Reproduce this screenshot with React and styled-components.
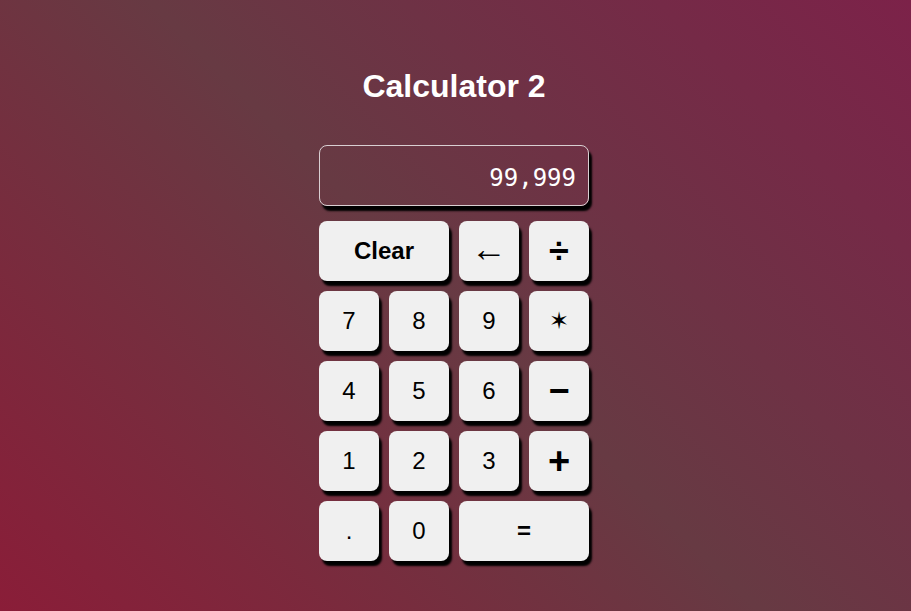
import React from 'react'
import styled, { createGlobalStyle } from 'styled-components'

const GlobalStyle = createGlobalStyle`
    html, body {
        margin: 0;
        padding: 0;
    }

    body {
        min-height: 100vh;
        font-family: "Liberation Sans", Arial, sans-serif;
        background: linear-gradient(45deg, #8a1d38 0%, #673a43 50%, #7c2249 100%);
        background-attachment: fixed;
    }
`;

const Page = styled.main`
    min-height: 100vh;
    display: flex;
    flex-direction: column;
    align-items: center;
    padding: 68px 3px 0 0;
    box-sizing: border-box;
`;

const Title = styled.h1`
    margin: 0 0 40px;
    font-size: 32px;
    font-weight: 700;
    line-height: 37px;
    color: #fff;
`;

const Calculator = styled.div`
    display: flex;
    flex-direction: column;
    gap: 15px;
    width: 270px;
`;

const Display = styled.output`
    height: 61px;
    box-sizing: border-box;
    display: flex;
    align-items: center;
    justify-content: flex-end;
    padding: 4px 12px 0;
    border: 1px solid #d9cfd2;
    border-radius: 8px;
    color: #fff;
    font-family: "DejaVu Sans Mono", "Liberation Mono", monospace;
    font-size: 24px;
    box-shadow: 3px 5px 2px #000;
`;

const Keypad = styled.div`
    display: grid;
    grid-template-columns: repeat(4, 60px);
    grid-auto-rows: 60px;
    gap: 10px;
`;

const Key = styled.button`
    grid-column: span ${p => p.span || 1};
    display: flex;
    align-items: center;
    justify-content: center;
    padding: 0 0 ${p => p.lift || 0}px;
    border: none;
    border-radius: 8px;
    background: #f0f0f0;
    color: #000;
    font-family: ${p => p.family || '"Liberation Sans", Arial, sans-serif'};
    font-size: ${p => p.size || 24}px;
    font-weight: ${p => (p.bold ? 700 : 400)};
    box-shadow: 3px 5px 2px #000;
    cursor: pointer;
`;

const keys = [
    { label: 'Clear', span: 2, bold: true },
    { label: '←', size: 36, lift: 4, family: '"Liberation Serif", serif' },
    { label: '÷', size: 36, bold: true },
    { label: '7' }, { label: '8' }, { label: '9' },
    { label: '✶', size: 24, family: '"DejaVu Sans", sans-serif' },
    { label: '4' }, { label: '5' }, { label: '6' },
    { label: '−', size: 36, bold: true },
    { label: '1' }, { label: '2' }, { label: '3' },
    { label: '+', size: 38, bold: true },
    { label: '.' }, { label: '0' },
    { label: '=', span: 2, bold: true },
];

const App = () => (
    <>
        <GlobalStyle />
        <Page>
            <Title>Calculator 2</Title>
            <Calculator>
                <Display>99,999</Display>
                <Keypad>
                    {keys.map(k => (
                        <Key
                            key={k.label}
                            span={k.span}
                            bold={k.bold}
                            size={k.size}
                            lift={k.lift}
                            family={k.family}
                        >
                            {k.label}
                        </Key>
                    ))}
                </Keypad>
            </Calculator>
        </Page>
    </>
)

export default App
